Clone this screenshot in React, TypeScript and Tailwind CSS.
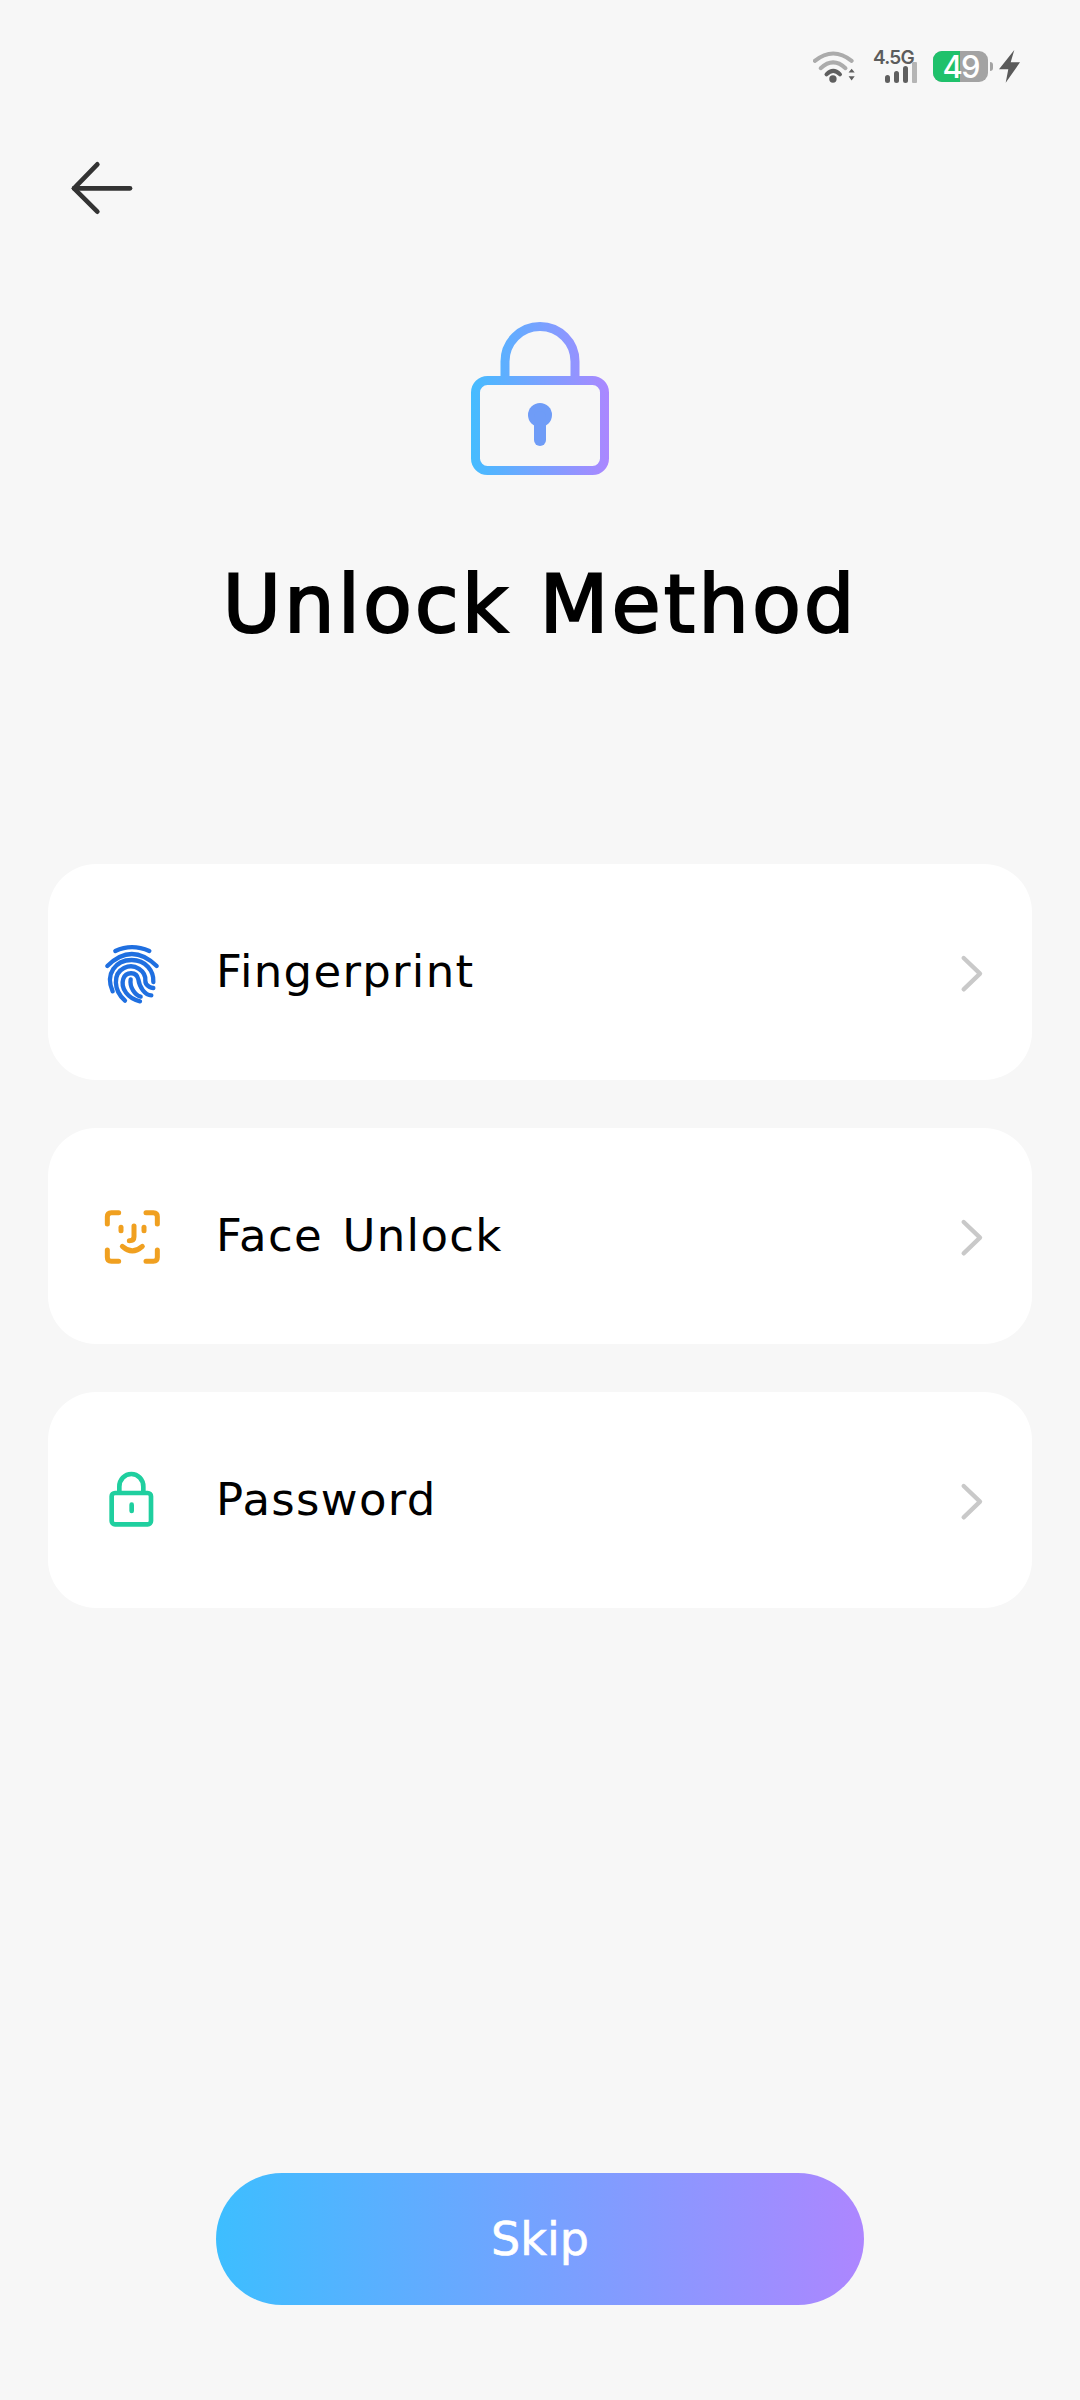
import { ReactNode } from 'react';

const StatusBar = () => (
  <div className="flex h-[66px] items-start justify-end pt-[50px]">
    <div className="mr-[60px] flex h-[33px] items-center">
      <svg width="46" height="34" viewBox="0 0 150 108" fill="none" className="ml-[2px] mr-[14px]">
        <path d="M6 34 Q66 -14 126 34" stroke="#ababab" strokeWidth="13" strokeLinecap="round" />
        <path d="M25 58 Q66 20 106 58" stroke="#ababab" strokeWidth="13" strokeLinecap="round" />
        <path d="M44 78 Q66 56 88 78" stroke="#5f5f5f" strokeWidth="13" strokeLinecap="round" />
        <circle cx="65" cy="93" r="12" fill="#5f5f5f" />
        <path d="M116 72 L126 60 L136 72 Z M116 84 H136 L126 98 Z" fill="#5f5f5f" />
      </svg>
      <div className="relative h-[33px] w-[52px]">
        <span className="absolute left-0 top-[-2px] text-[19px] leading-[20px] font-semibold tracking-[-0.8px] text-[#5c5c5c] [font-family:Inter,sans-serif]">
          4.5G
        </span>
        <svg width="34" height="21" viewBox="0 0 34 21" className="absolute left-[12px] top-[12px]">
          <rect x="0" y="13" width="5" height="8" rx="2.5" fill="#5f5f5f" />
          <rect x="9" y="9" width="5" height="12" rx="2.5" fill="#5f5f5f" />
          <rect x="18" y="4" width="5" height="17" rx="2.5" fill="#5f5f5f" />
          <rect x="27" y="0" width="5" height="21" rx="1" fill="#b5b5b5" />
        </svg>
      </div>
      <div className="relative ml-[8px] flex h-[31px] w-[55px] rounded-[9px] bg-[#a3a3a3]">
        <div className="h-full w-[27px] rounded-l-[9px] bg-[#1fc16b]" />
        <span className="absolute inset-0 text-center text-[31px] leading-[31px] font-medium tracking-[-2px] text-white [font-family:Inter,sans-serif]">
          49
        </span>
      </div>
      <div className="ml-[2px] mr-[6px] h-[9px] w-[3px] rounded-r-sm bg-[#a3a3a3]" />
      <svg width="21" height="33" viewBox="0 0 21 33">
        <path d="M15.3 0 L0 19.3 H9.3 L6.7 32.7 L21 12.3 H11.7 Z" fill="#5a5a5a" />
      </svg>
    </div>
  </div>
);

const BackArrow = () => (
  <svg width="100" height="100" viewBox="0 0 300 300" fill="none" stroke="#333333" strokeWidth="14" strokeLinecap="round" strokeLinejoin="round">
    <path d="M172 103 L102 175 L172 245" />
    <path d="M102 175 H270" />
  </svg>
);

const HeroLock = () => (
  <svg width="138" height="153" viewBox="0 0 138 153" fill="none">
    <defs>
      <linearGradient id="lockGrad" gradientUnits="userSpaceOnUse" x1="0" y1="0" x2="138" y2="0">
        <stop offset="0" stopColor="#45bcff" />
        <stop offset="1" stopColor="#ab87ff" />
      </linearGradient>
    </defs>
    <rect x="4.5" y="58.5" width="129" height="90" rx="12" stroke="url(#lockGrad)" strokeWidth="9" />
    <path d="M34 56 V39.5 A35 35 0 0 1 104 39.5 V56" stroke="url(#lockGrad)" strokeWidth="9" />
    <circle cx="69" cy="93" r="12" fill="#6f9cf7" />
    <path d="M69 95 V118" stroke="#6f9cf7" strokeWidth="12" strokeLinecap="round" />
  </svg>
);

const iconProps = {
  width: 90,
  height: 80,
  viewBox: '0 0 270 240',
  fill: 'none',
  strokeLinecap: 'round' as const,
  strokeLinejoin: 'round' as const,
};

const FingerprintIcon = () => (
  <svg {...iconProps} stroke="#1f6fe0" strokeWidth="13">
    <path d="M76 57 Q125 34 178 57" />
    <path d="M52 102 Q125 30 200 102" />
    <path d="M68 178 C44 125 78 84 125 84 C168 84 192 118 190 150" />
    <path d="M105 206 C70 175 68 125 102 108 C135 92 168 118 166 146 C165 165 190 168 190 168" />
    <path d="M150 208 C115 200 90 170 100 140 C108 118 140 118 145 142 C148 165 165 190 184 190" />
    <path d="M122 142 C118 165 135 190 152 194" />
  </svg>
);

const FaceIcon = () => (
  <svg {...iconProps} stroke="#f0a020" strokeWidth="15">
    <path d="M52 84 V62 Q52 50 64 50 H86" />
    <path d="M168 50 H190 Q202 50 202 62 V84" />
    <path d="M52 162 V184 Q52 196 64 196 H86" />
    <path d="M168 196 H190 Q202 196 202 184 V162" />
    <path d="M93 94 V104" />
    <path d="M162 94 V104" />
    <path d="M132 90 V122 Q132 134 118 134" />
    <path d="M97 151 Q127 178 157 151" />
  </svg>
);

const PasswordIcon = () => (
  <svg {...iconProps} stroke="#1fcf9f" strokeWidth="14">
    <rect x="65" y="99" width="118" height="94" rx="10" />
    <path d="M88 97 V80 A36 38 0 0 1 160 80 V97" />
    <path d="M125 134 V153" />
  </svg>
);

const Chevron = () => (
  <svg width="100" height="80" viewBox="0 0 300 240" fill="none" stroke="#c9c9c9" strokeWidth="13" strokeLinecap="round" strokeLinejoin="round">
    <path d="M101 78 L150 125 L101 172" />
  </svg>
);

const Row = ({ icon, label }: { icon: ReactNode; label: string }) => (
  <div className="flex h-[216px] items-center rounded-[48px] bg-white">
    <div className="ml-[42px] w-[126px]">{icon}</div>
    <span className="text-[45px] tracking-[1.3px] [word-spacing:4px] text-black">{label}</span>
    <div className="ml-auto mr-[2px]">
      <Chevron />
    </div>
  </div>
);

const App = () => {
  return (
    <div className="flex h-[2400px] w-[1080px] flex-col bg-[#f7f7f7] [font-family:'DejaVu_Sans',sans-serif]">
      <StatusBar />
      <div className="ml-[40px] mt-[64px] h-[100px]">
        <BackArrow />
      </div>
      <div className="mt-[92px] flex justify-center">
        <HeroLock />
      </div>
      <h1 className="mt-[82px] text-center text-[80px] leading-[96px] font-normal tracking-[3px] text-black [-webkit-text-stroke:2px_black]">
        Unlock Method
      </h1>
      <div className="mt-[211px] flex flex-col gap-[48px] px-[48px]">
        <Row icon={<FingerprintIcon />} label="Fingerprint" />
        <Row icon={<FaceIcon />} label="Face Unlock" />
        <Row icon={<PasswordIcon />} label="Password" />
      </div>
      <div className="mt-auto mb-[95px] flex justify-center">
        <div className="flex h-[132px] w-[648px] items-center justify-center rounded-full bg-linear-to-r/srgb from-[#3dbeff] to-[#ad86ff] text-[46px] text-white [-webkit-text-stroke:0.6px_white]">
          Skip
        </div>
      </div>
    </div>
  );
};

export default App;
